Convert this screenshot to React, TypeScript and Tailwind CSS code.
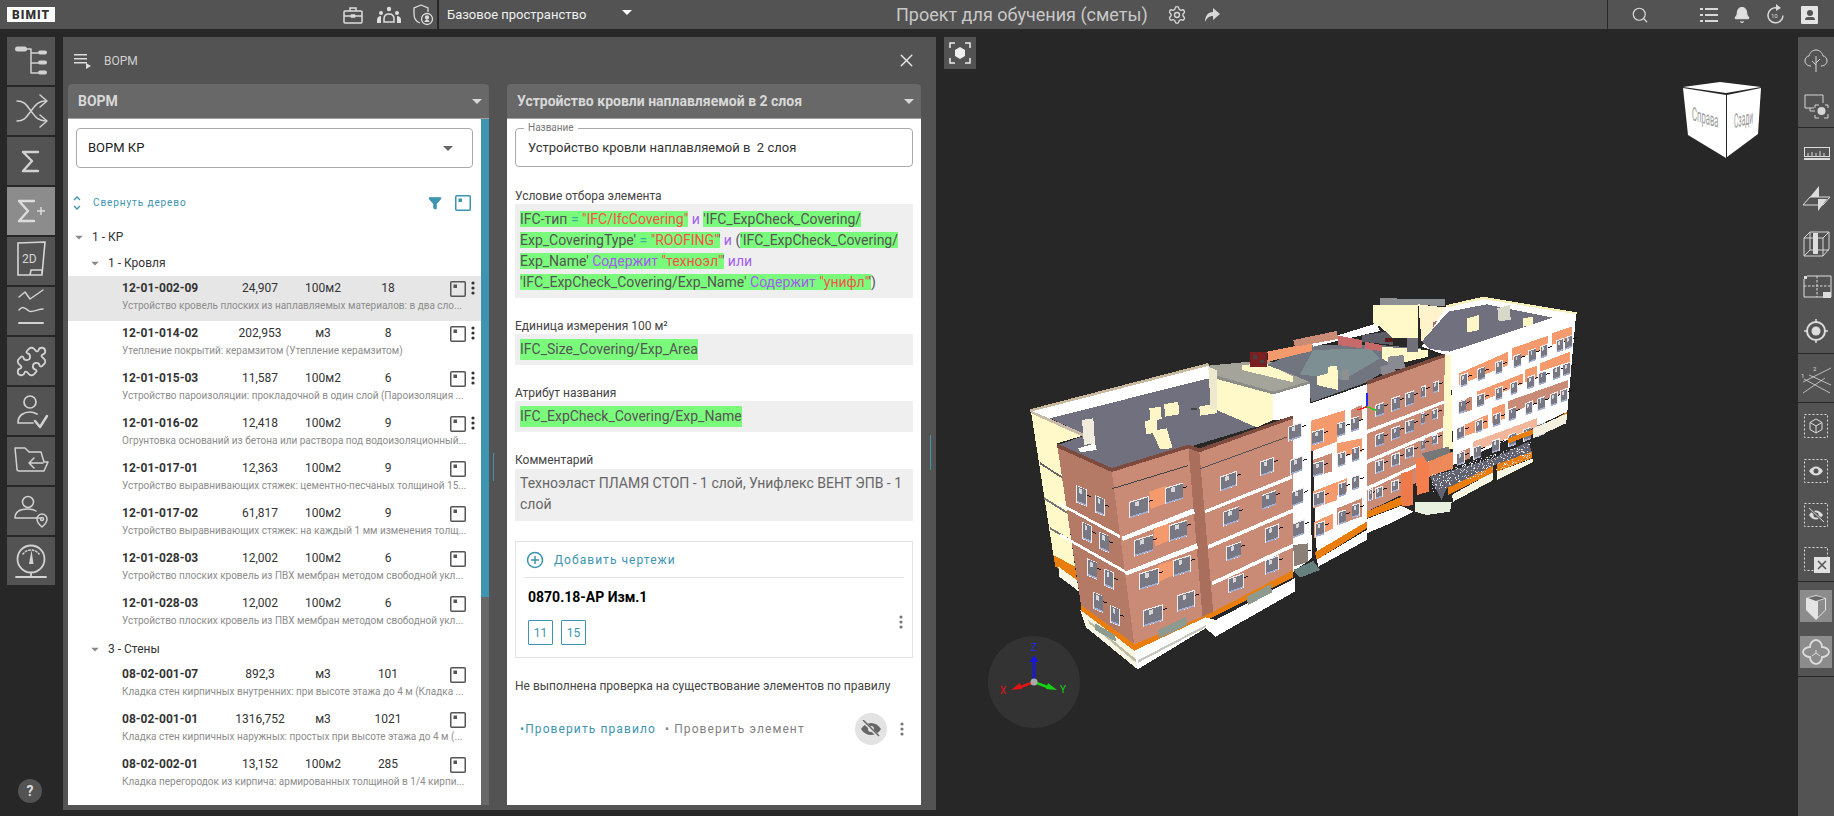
import * as React from 'react';
import { Puzzle, Settings, Search, Bell, Filter, X } from 'lucide-react';

const FONT = "font-['Roboto',sans-serif]";

const rows1 = [
  ['12-01-002-09', '24,907', '100м2', '18', 'Устройство кровель плоских из наплавляемых материалов: в два сло...'],
  ['12-01-014-02', '202,953', 'м3', '8', 'Утепление покрытий: керамзитом (Утепление керамзитом)'],
  ['12-01-015-03', '11,587', '100м2', '6', 'Устройство пароизоляции: прокладочной в один слой (Пароизоляция ...'],
  ['12-01-016-02', '12,418', '100м2', '9', 'Огрунтовка оснований из бетона или раствора под водоизоляционный...'],
  ['12-01-017-01', '12,363', '100м2', '9', 'Устройство выравнивающих стяжек: цементно-песчаных толщиной 15...'],
  ['12-01-017-02', '61,817', '100м2', '9', 'Устройство выравнивающих стяжек: на каждый 1 мм изменения толщ...'],
  ['12-01-028-03', '12,002', '100м2', '6', 'Устройство плоских кровель из ПВХ мембран методом свободной укл...'],
  ['12-01-028-03', '12,002', '100м2', '6', 'Устройство плоских кровель из ПВХ мембран методом свободной укл...'],
];

const rows2 = [
  ['08-02-001-07', '892,3', 'м3', '101', 'Кладка стен кирпичных внутренних: при высоте этажа до 4 м (Кладка ...'],
  ['08-02-001-01', '1316,752', 'м3', '1021', 'Кладка стен кирпичных наружных: простых при высоте этажа до 4 м (...'],
  ['08-02-002-01', '13,152', '100м2', '285', 'Кладка перегородок из кирпича: армированных толщиной в 1/4 кирпи...'],
];

function Caret({ className }: { className: string }) {
  return <span className={`inline-block h-0 w-0 border-x-[5px] border-t-[5px] border-x-transparent ${className}`} />;
}

function Dots({ className = 'fill-[#333]' }: { className?: string }) {
  return (
    <svg width="4" height="14" viewBox="0 0 4 14" className={className}>
      <circle cx="2" cy="2" r="1.6" />
      <circle cx="2" cy="7" r="1.6" />
      <circle cx="2" cy="12" r="1.6" />
    </svg>
  );
}

function SquareMark({ dark = true }: { dark?: boolean }) {
  const c = dark ? '#555' : '#3d94b0';
  return (
    <svg width="16" height="16" viewBox="0 0 16 16">
      <rect x="0.75" y="0.75" width="14.5" height="14.5" rx="1" fill="none" stroke={c} strokeWidth="1.5" />
      <rect x="3.5" y="3.5" width="3.5" height="3.5" fill={c} />
    </svg>
  );
}

function Row({ r, active, dots }: { r: string[]; active?: boolean; dots?: boolean }) {
  return (
    <div className={`h-[45px] pl-[54px] ${active ? 'bg-[#e6e6e6]' : ''}`}>
      <div className="flex h-[24px] items-center text-[12px] text-[#333]">
        <span className="w-[100px] font-bold">{r[0]}</span>
        <span className="w-[76px] text-center">{r[1]}</span>
        <span className="w-[50px] text-center">{r[2]}</span>
        <span className="w-[80px] text-center">{r[3]}</span>
        <span className="ml-[22px] flex items-center pt-[2px]"><SquareMark /></span>
        {dots && <span className="ml-[5px] flex items-center"><Dots /></span>}
      </div>
      <div className="w-[345px] whitespace-nowrap text-[10px] leading-[12px] text-[#8d8d8d]">{r[4]}</div>
    </div>
  );
}

function TreeHead({ text, left }: { text: string; left: string }) {
  return (
    <div className={`flex h-[26px] items-center text-[12px] text-[#333] ${left}`}>
      <Caret className="mr-[8px] scale-75 border-t-[#888]" />
      {text}
    </div>
  );
}

// --- подсветка условий
function G({ children }: { children: React.ReactNode }) {
  return <span className="bg-[#7bfb7b]">{children}</span>;
}
const Red = ({ children }: { children: React.ReactNode }) => <span className="text-[#f2544c]">{children}</span>;
const Vi = ({ children }: { children: React.ReactNode }) => <span className="text-[#a45cf0]">{children}</span>;
const Eq = ({ children }: { children: React.ReactNode }) => <span className="text-[#35b5a0]">{children}</span>;

function Ln({ children }: { children: React.ReactNode }) {
  return <div className="h-[21px] whitespace-nowrap leading-[21px]">{children}</div>;
}

function Attr({ label, text }: { label: string; text: string }) {
  return (
    <div>
      <div className="mx-[8px] h-[15px] text-[12px] leading-[15px] text-[#444]">{label}</div>
      <div className="mx-[8px] flex h-[31px] items-center bg-[#efefef] pl-[5px] text-[14px] text-[#555]">
        <G>{text}</G>
      </div>
    </div>
  );
}

// --- левые кнопки
const railStroke = { fill: 'none', stroke: '#d2d2d2', strokeWidth: 1.5, strokeLinecap: 'round' as const, strokeLinejoin: 'round' as const };

function Rail({ active, children }: { active?: boolean; children: React.ReactNode }) {
  return (
    <div className={`flex h-[48px] w-[48px] items-center justify-center ${active ? 'bg-[#8c8c8c]' : 'bg-[#535353]'}`}>
      {children}
    </div>
  );
}

function Svg48({ children }: { children: React.ReactNode }) {
  return <svg width="48" height="48" viewBox="0 0 48 48">{children}</svg>;
}

function LeftRail() {
  return (
    <div className="flex w-[63px] shrink-0 flex-col gap-[2px] pl-[7px] pt-[8px]">
      <Rail>
        <Svg48>
          <g {...railStroke}>
            <path d="M18 12h6v24h7M24 16h7M24 26h7" />
          </g>
          <rect x="8" y="9.5" width="12" height="5" rx="2.5" fill="#d2d2d2" />
          <rect x="31" y="13.5" width="9" height="4" rx="2" fill="#d2d2d2" />
          <rect x="31" y="23.5" width="9" height="4" rx="2" fill="#d2d2d2" />
          <rect x="31" y="33.5" width="9" height="4" rx="2" fill="#d2d2d2" />
        </Svg48>
      </Rail>
      <Rail>
        <Svg48>
          <g {...railStroke}>
            <path d="M10 14c8 0 10 5 14 10s6 10 15 10M10 34c8 0 10-5 14-10s6-10 15-10" />
            <path d="M33 8l7 6-7 6M33 28l7 6-7 6" />
          </g>
        </Svg48>
      </Rail>
      <Rail>
        <Svg48>
          <path d="M31 15H16l9 9-9 10h15" fill="none" stroke="#d2d2d2" strokeWidth="2.4" strokeLinecap="round" strokeLinejoin="round" />
        </Svg48>
      </Rail>
      <Rail active>
        <Svg48>
          <path d="M27 14H12l9 10-9 10h15" fill="none" stroke="#dcdcdc" strokeWidth="2.4" strokeLinecap="round" strokeLinejoin="round" />
          <path d="M30 24h8M34 20v8" fill="none" stroke="#dcdcdc" strokeWidth="1.5" />
        </Svg48>
      </Rail>
      <Rail>
        <Svg48>
          <path d="M11 6l27-1-3 33H11zM35 38v-5H24l-1 5" fill="none" stroke="#d6d6d6" strokeWidth="1.6" />
          <text x="15" y="26" fontSize="12" fill="#d6d6d6" fontFamily="Roboto">2D</text>
        </Svg48>
      </Rail>
      <Rail>
        <Svg48>
          <g {...railStroke}>
            <path d="M12 10l6-5 5 7 13-9" />
            <path d="M12 23c4-5 7-1 10 1s9-2 14-2" />
            <path d="M12 36h24" strokeWidth="2" />
          </g>
        </Svg48>
      </Rail>
      <Rail><Puzzle size={33} strokeWidth={1.3} color="#d2d2d2" /></Rail>
      <Rail>
        <Svg48>
          <g {...railStroke} strokeWidth={1.7}>
            <circle cx="23" cy="15" r="6" />
            <path d="M11 36c0-8 6-11 12-11 3 0 5 1 7 2M11 36h15" />
            <path d="M28 34l5 6 7-11" strokeWidth={2.4} />
          </g>
        </Svg48>
      </Rail>
      <Rail>
        <Svg48>
          <g {...railStroke}>
            <path d="M8 11h10l4 4h12l3 10h4l-4 9H12c-1 0-2-1-2-2z" />
            <path d="M36 26H22M27 21l-5 5 5 5" />
          </g>
        </Svg48>
      </Rail>
      <Rail>
        <Svg48>
          <g {...railStroke}>
            <circle cx="21" cy="15" r="5.5" />
            <path d="M8 31c0-7 6-9 13-9 3 0 6 .6 8 2M8 31h25" />
            <path d="M40 32c0 4-5 8-5 8s-5-4-5-8a5 5 0 0 1 10 0z" />
            <circle cx="35" cy="32" r="1.5" />
          </g>
        </Svg48>
      </Rail>
      <Rail>
        <Svg48>
          <g {...railStroke}>
            <circle cx="24" cy="22" r="13.5" strokeWidth={1.8} />
            <path d="M16 17a10 10 0 0 1 16 0" strokeDasharray="1.5 2" />
            <path d="M24 36v3M9 40h30" strokeWidth={1.8} />
          </g>
          <path d="M24.5 13l2 14h-4.500z" fill="#d2d2d2" />
        </Svg48>
      </Rail>
      <div className="mt-[192px] ml-[11px] flex h-[24px] w-[24px] items-center justify-center rounded-full bg-[#535353] text-[14px] font-bold text-[#ddd]">?</div>
    </div>
  );
}

// --- правая панель
const ts = { fill: 'none', stroke: '#d6d6d6', strokeWidth: 1, strokeLinejoin: 'round' as const };

function Tool({ active, children, h = 44 }: { active?: boolean; children: React.ReactNode; h?: number }) {
  return (
    <div className="flex items-center justify-center" style={{ height: h }}>
      <div className={`flex h-[32px] w-[32px] items-center justify-center ${active ? 'bg-[#8c8c8c]' : ''}`}>
        <svg width="32" height="32" viewBox="0 0 32 32">{children}</svg>
      </div>
    </div>
  );
}

const Sep = () => <div className="h-[1px] bg-[#272727]" />;

function Dash({ children }: { children?: React.ReactNode }) {
  return (
    <>
      <rect x="4.500" y="4.500" width="23" height="23" fill="none" stroke="#ddd" strokeWidth="1" strokeDasharray="2 2" />
      {children}
    </>
  );
}

function RightBar() {
  return (
    <div className="mt-[8px] flex h-[779px] w-[36px] shrink-0 flex-col bg-[#535353]">
      <Tool h={46}>
        <g {...ts}>
          <path d="M16 28V12M16 21l-4-4M16 19l4-4" />
          <path d="M11 22c-3 0-6-2-6-5s2-5 4-5c1-4 4-6 7-6s6 2 7 6c2 0 4 2 4 5s-3 5-6 5" />
        </g>
      </Tool>
      <Tool h={44}>
        <g {...ts}>
          <path d="M14 19H5V6h18v8" />
          <path d="M10 19v3h5" />
          <path d="M15 16h4M25 16h3v3M15 16v3M28 25v4h-4M15 26v3h4" />
        </g>
        <circle cx="21.500" cy="22" r="4" fill="#d6d6d6" />
      </Tool>
      <Sep />
      <Tool h={49}>
        <rect x="4.500" y="10.500" width="25" height="9" fill="none" stroke="#ddd" />
        <path d="M8 19v-3M12 19v-4M16 19v-3M20 19v-5M24 19v-3" stroke="#ddd" />
        <rect x="4" y="21" width="26" height="2" fill="#ddd" />
      </Tool>
      <Tool>
        <path d="M19 3v11h-9zM18 28V16h9z" fill="#ddd" />
        <path d="M3 22l7-8h20l-7 8z" fill="none" stroke="#ddd" />
      </Tool>
      <Tool>
        <g {...ts}>
          <path d="M4 11h19v18H4zM4 11l6-6h19v17l-6 7M23 11l6-6M10 5v18l-6 6M10 23h19" />
        </g>
        <rect x="13" y="6" width="5" height="21" fill="#ddd" />
      </Tool>
      <Tool>
        <path d="M4 8l3-3h24v21H4z" fill="none" stroke="#ddd" />
        <path d="M17 5v21M4 15h26" fill="none" stroke="#ddd" strokeDasharray="2.500 1.500" />
        <path d="M4 5h3v3H4zM23 21h8v6H23z" fill="#ddd" />
      </Tool>
      <Tool>
        <circle cx="16" cy="16" r="9" fill="none" stroke="#ddd" strokeWidth="2" />
        <circle cx="16" cy="16" r="4.500" fill="#ddd" />
        <path d="M16 4v3M16 25v3M4 16h3M25 16h3" stroke="#ddd" strokeWidth="1.500" />
      </Tool>
      <Sep />
      <Tool h={48}>
        <path d="M3 20l28-14M4 17l26 14M3 31l22-15M9 13l22 10" stroke="#d6d6d6" fill="none" strokeWidth="0.8" />
        <text x="1" y="16" fontSize="6" fill="#ddd" fontFamily="Roboto">1</text>
        <text x="13" y="9" fontSize="6" fill="#ddd" fontFamily="Roboto">2</text>
      </Tool>
      <Sep />
      <Tool h={46}>
        <Dash>
          <path d="M16 9l6 3.500v7L16 23l-6-3.500v-7zM10 12.500l6 3.500 6-3.500M16 16v7" fill="none" stroke="#ddd" />
        </Dash>
      </Tool>
      <Tool>
        <Dash>
          <path d="M9 16c4-6 10-6 14 0-4 6-10 6-14 0z" fill="#ddd" />
          <circle cx="16" cy="16" r="2.500" fill="#535353" />
        </Dash>
      </Tool>
      <Tool>
        <Dash>
          <path d="M9 16c4-6 10-6 14 0-4 6-10 6-14 0z" fill="#ddd" />
          <circle cx="16" cy="16" r="2.500" fill="#535353" />
          <path d="M10 10l14 13" stroke="#535353" strokeWidth="2.500" />
          <path d="M9 9l15 14" stroke="#ddd" />
        </Dash>
      </Tool>
      <Tool>
        <Dash />
        <rect x="14" y="14" width="16" height="16" fill="#e2e2e2" />
        <path d="M18 18l8 8M26 18l-8 8" stroke="#535353" strokeWidth="1.500" />
      </Tool>
      <Sep />
      <Tool h={48} active>
        <path d="M6 8l10-3 10 3v12l-10 10-10-10z" fill="#e4e4e4" />
        <path d="M8 8l8-2 9 2-9 3z" fill="#666" />
        <path d="M18 11l7-2v11l-7 7z" fill="#8c8c8c" />
      </Tool>
      <Tool active>
        <g fill="none" stroke="#dcdcdc" strokeWidth="1.800">
          <path d="M16 4c4 0 6 4 6 7 3 0 7 2 7 5s-4 5-7 5c0 3-2 7-6 7s-6-4-6-7c-3 0-7-2-7-5s4-5 7-5c0-3 2-7 6-7z" />
          <path d="M16 14v3M16 17l-4 3M16 17l4 3" strokeWidth="1" />
        </g>
      </Tool>
      <div className="mt-[2px]"><Sep /></div>
    </div>
  );
}

// --- модель здания, координаты в 3x от точки (1060, 295)
type Win = [number, number, number, number];

function Windows({ list, s }: { list: Win[]; s: number }) {
  const poly = (x: number, y: number, w: number, h: number) =>
    `${x},${y} ${x + w},${y + w * s} ${x + w},${y + w * s + h} ${x},${y + h}`;
  return (
    <>
      {list.map(([x, y, w, h], i) => (
        <g key={i}>
          <polygon points={poly(x, y, w, h)} fill="#ececec" />
          <polygon points={poly(x + 2, y + 3, w - 4, h - 9)} fill="#777883" />
          <polygon points={poly(x + w * 0.3, y + 6 + w * 0.3 * s, w * 0.22, h * 0.28)} fill="#d8d8d8" />
          <polygon points={poly(x + 2, y + h - 6, w - 4, 5)} fill="#a3add0" />
          <polygon points={poly(x + w, y + h * 0.3 + w * s, 12, 3)} fill="#111" />
        </g>
      ))}
    </>
  );
}

function rowF(y0: number, x0: number, xs: number[]): Win[] {
  return xs.map((x) => [x, y0 - (x - x0) * 0.36, 24, 38]);
}

const speck = Array.from({ length: 300 }, (_, i) => {
  const a = Math.sin(i * 12.9898) * 43758.5453;
  const b = Math.sin(i * 78.233) * 24634.6345;
  const x = 1115 + (a - Math.floor(a)) * 295;
  const y = 540 - (x - 1110) * 0.33 + (b - Math.floor(b)) * 50;
  return [x, y];
});

function Building() {
  return (
    <svg className="absolute left-[64px] top-[251px] h-[420px] w-[620px]" viewBox="-180 -45 1860 1260" shapeRendering="crispEdges">
      {/* левое крыло: парапет, боковая стена */}
      <polygon points="-91,347 445,208 470,250 -30,372" fill="#fff" />
      <polygon points="-91,343 445,204 447,212 -91,351" fill="#c8b89e" />
      <polygon points="-87,350 75,420 -8,445 45,815 -20,780" fill="#fff8c9" />
      <polygon points="-87,347 78,418 75,428 -85,356" fill="#c9b9a8" />
      <polygon points="-62,500 15,550 18,558 -60,508" fill="#666" />
      <polygon points="-50,605 22,650 24,658 -48,613" fill="#777" />
      <polygon points="-32,695 28,730 30,738 -30,703" fill="#777" />
      <polygon points="-20,780 45,815 51,855 -14,815" fill="#e97e0e" />
      <polygon points="-5,815 51,855 57,890 -2,845" fill="#f8f6e4" />
      {/* серая кровля */}
      <polygon points="-30,370 445,250 470,345 590,395 155,525 -8,450 80,420" fill="#70707e" />
      <polygon points="66,375 100,370 105,445 72,450" fill="#f0ebdc" />
      <polygon points="55,460 105,445 110,465 60,472" fill="#fff" />
      <polygon points="268,340 302,335 305,372 272,378" fill="#fff6c8" />
      <polygon points="312,328 355,320 357,358 316,365" fill="#fff6c8" />
      <polygon points="255,378 290,372 292,412 258,418" fill="#fff6c8" />
      <polygon points="275,408 320,400 338,460 300,462" fill="#fff6c8" />
      <polygon points="418,335 470,325 470,355 420,362" fill="#fff6c8" />
      <polygon points="392,340 412,338 412,344 392,346" fill="#444" />
      {/* надстройка */}
      <polygon points="445,212 620,195 750,262 640,295 470,245" fill="#a4a49a" />
      <polygon points="445,215 470,225 472,345 452,340" fill="#eee9cc" />
      <polygon points="470,245 640,295 640,375 590,397 470,345" fill="#fff8c9" />
      <polygon points="640,295 750,262 752,780 725,790 725,355 680,372 640,375" fill="#fff" />
      <polygon points="545,210 620,205 700,245 700,262 545,225" fill="#fff8c9" />
      <polygon points="470,242 640,290 750,258 750,266 640,298 470,252" fill="#8d8d88" />
      <polygon points="570,172 622,172 622,215 570,215" fill="#7a2020" />
      <polygon points="578,180 590,180 590,192 578,192" fill="#444" />
      <polygon points="600,195 612,195 612,205 600,205" fill="#444" />
      {/* центр */}
      <polygon points="620,210 755,150 960,150 1085,160 920,262 752,322 750,262 700,240" fill="#70757f" />
      <polygon points="760,165 930,160 960,190 850,255 720,238" fill="#7d8f93" />
      <polygon points="755,145 950,85 960,108 760,155" fill="#fff" />
      <polygon points="622,170 755,143 755,168 625,200" fill="#f49a6c" />
      <polygon points="700,135 830,108 835,132 705,155" fill="#c98a76" />
      <polygon points="835,122 905,135 905,160 835,150" fill="#c96a6a" />
      <polygon points="905,120 1000,108 1000,150 905,140" fill="#5d5d68" />
      <polygon points="915,140 965,150 965,168 915,162" fill="#c96a6a" />
      <polygon points="770,245 835,225 835,285 770,270" fill="#fff8c9" />
      <polygon points="805,215 830,212 830,250 805,250" fill="#fff8c9" />
      <polygon points="845,225 868,222 868,255 845,255" fill="#8f8f8f" />
      <polygon points="965,155 1105,165 1105,185 1000,210 965,190" fill="#fff8c9" />
      <polygon points="985,185 1030,180 1035,220 985,225" fill="#8a8a92" />
      <polygon points="1040,130 1075,130 1075,170 1040,170" fill="#70707a" />
      <polygon points="960,215 1000,205 1010,235 965,240" fill="#8a8a92" />
      <polygon points="975,130 1000,128 1000,140 975,142" fill="#5a1a1a" />
      {/* башня и правая кровля */}
      <polygon points="940,30 1075,30 1075,130 1000,130 960,95 940,85" fill="#fff8c9" />
      <polygon points="960,10 1155,12 1155,32 960,30" fill="#8c9092" />
      <polygon points="1075,28 1160,38 1160,132 1085,142" fill="#fff3cc" />
      <polygon points="1120,80 1142,78 1142,118 1120,120" fill="#a4706a" />
      <polygon points="1160,30 1270,5 1550,55 1548,68 1170,185 1085,155" fill="#fff" />
      <polygon points="1160,30 1270,5 1550,52 1550,58 1270,12 1160,38" fill="#f7efb8" />
      <polygon points="1085,140 1165,50 1280,28 1478,68 1170,170 1110,162" fill="#70707e" />
      <polygon points="1220,70 1258,60 1258,105 1222,112" fill="#fff6c8" />
      <polygon points="1388,70 1418,65 1418,90 1390,95" fill="#fff6c8" />
      <polygon points="1312,40 1350,30 1352,75 1316,78" fill="#d8d8c8" />
      {/* фасады */}
      <polygon points="-8,452 155,525 223,1050 63,930" fill="#b47a66" />
      <polygon points="155,525 385,455 428,970 223,1050" fill="#c98b76" />
      <polygon points="385,455 418,468 460,955 428,970" fill="#aa6f5c" />
      <polygon points="418,470 725,355 700,830 460,955" fill="#c98b76" />
      <polygon points="-8,446 155,519 385,449 418,460 680,368 725,352 725,362 418,472 385,460 155,531 -8,458" fill="#7d4a3e" />
      <polygon points="700,340 752,325 755,790 700,830" fill="#fff" />
      <polygon points="752,325 920,268 920,680 770,770" fill="#fff" />
      <polygon points="920,262 1155,180 1160,480 1025,600 920,650" fill="#c98b76" />
      <polygon points="920,258 1155,176 1155,186 920,270" fill="#7d4a3e" />
      <polygon points="1172,182 1548,62 1522,350 1180,510" fill="#fff" />
      <polygon points="1155,180 1172,180 1178,462 1148,465" fill="#fff8c9" />
      {/* полосы-перекрытия, кирпич */}
      <polygon points="185,725 400,640 405,655 188,738" fill="#fff" />
      <polygon points="195,830 410,745 415,760 198,842" fill="#fff" />
      <polygon points="-5,620 180,720 180,730 -3,630" fill="#fff" />
      <polygon points="0,715 195,825 195,835 2,725" fill="#fff" />
      <polygon points="435,645 695,540 695,552 435,655" fill="#fff" />
      <polygon points="445,750 700,640 700,652 445,762" fill="#fff" />
      <polygon points="455,860 700,745 700,757 455,872" fill="#fff" />
      <polygon points="920,405 1155,315 1155,325 920,417" fill="#fff" />
      <polygon points="920,495 1155,395 1155,405 920,507" fill="#fff" />
      <polygon points="920,575 1150,470 1150,480 920,587" fill="#fff" />
      <polygon points="155,580 385,510 385,513 155,583" fill="#444" />
      <polygon points="420,520 680,425 680,428 420,523" fill="#555" />
      {/* панели на белых участках */}
      <polygon points="752,378 856,345 856,405 832,412 832,440 752,470" fill="#f49a6c" />
      <polygon points="832,445 905,430 905,470 832,490" fill="#f49a6c" />
      <polygon points="758,495 815,475 815,530 758,545" fill="#c98b76" />
      <polygon points="758,590 860,550 860,590 832,600 832,615 760,640" fill="#f49a6c" />
      <polygon points="872,520 905,505 905,560 872,570" fill="#fff" />
      <polygon points="762,682 820,655 820,700 762,730" fill="#f49a6c" />
      <polygon points="832,640 905,610 905,665 832,690" fill="#c98b76" />
      <polygon points="872,345 905,330 905,375 872,385" fill="#c98b76" />
      <polygon points="268,590 318,572 318,625 272,642" fill="#f49a6c" />
      <polygon points="282,700 330,685 330,735 284,755" fill="#f49a6c" />
      <polygon points="295,810 342,795 342,840 298,860" fill="#f49a6c" />
      <polygon points="1198,235 1345,170 1345,210 1198,270" fill="#f49a6c" />
      <polygon points="1355,160 1465,122 1465,160 1355,195" fill="#f49a6c" />
      <polygon points="1475,115 1535,95 1535,130 1475,150" fill="#f49a6c" />
      <polygon points="1250,290 1390,235 1390,265 1250,325" fill="#f49a6c" />
      <polygon points="1440,205 1530,170 1530,200 1440,230" fill="#f49a6c" />
      <polygon points="1395,225 1432,212 1432,250 1395,262" fill="#f49a6c" />
      <polygon points="1195,320 1235,305 1235,345 1195,358" fill="#c98b76" />
      <polygon points="1190,400 1285,358 1285,398 1190,432" fill="#f49a6c" />
      <polygon points="1295,340 1335,325 1335,370 1295,385" fill="#f49a6c" />
      <polygon points="1345,318 1525,255 1525,290 1345,355" fill="#c98b76" />
      <polygon points="1190,475 1230,458 1230,490 1190,505" fill="#c98b76" />
      <polygon points="1240,440 1430,370 1430,395 1240,470" fill="#f2b79a" />
      {/* окна */}
      <Windows s={0.42} list={[[48, 570, 32, 52], [105, 600, 30, 52], [66, 680, 30, 52], [118, 710, 30, 52], [82, 790, 30, 52], [132, 820, 30, 52], [100, 890, 30, 52], [150, 930, 30, 52]]} />
      <Windows s={-0.3} list={[[208, 620, 58, 50], [316, 578, 54, 50], [222, 735, 58, 50], [328, 690, 54, 50], [238, 835, 58, 50], [340, 795, 52, 50], [250, 945, 58, 50], [352, 900, 52, 50]]} />
      <Windows s={-0.36} list={[[480, 545, 50, 45], [600, 500, 42, 45], [685, 395, 40, 45], [490, 650, 48, 45], [605, 600, 44, 45], [690, 495, 38, 45], [498, 755, 46, 45], [615, 700, 42, 45], [695, 590, 36, 45], [505, 850, 46, 45], [615, 795, 42, 45], [698, 685, 36, 45], [702, 770, 40, 40]]} />
      <Windows s={-0.3} list={[[755, 410, 36, 42], [830, 385, 28, 42], [872, 370, 26, 42], [758, 505, 34, 42], [832, 475, 26, 42], [875, 460, 24, 42], [760, 595, 34, 42], [835, 565, 24, 42], [875, 545, 24, 42], [765, 685, 30, 42], [835, 650, 24, 40], [875, 630, 24, 40]]} />
      <Windows s={-0.36} list={[[945, 330, 28, 38], [993, 310, 28, 42], [1035, 295, 28, 42], [1082, 275, 16, 36], [1118, 262, 18, 34], [945, 420, 28, 38], [993, 400, 28, 38], [1035, 380, 28, 38], [1082, 355, 14, 36], [1115, 345, 18, 32], [945, 500, 26, 38], [993, 480, 26, 38], [1035, 460, 26, 34], [1082, 436, 14, 32], [1115, 422, 18, 30], [925, 585, 14, 34], [945, 580, 24, 34], [993, 560, 24, 34]]} />
      <Windows s={-0.36} list={rowF(240, 1200, [1200, 1252, 1305, 1360, 1405, 1440, 1488, 1514])} />
      <Windows s={-0.36} list={rowF(320, 1195, [1195, 1250, 1305, 1350, 1400, 1435, 1478, 1508])} />
      <Windows s={-0.36} list={rowF(398, 1190, [1190, 1245, 1298, 1345, 1395, 1432, 1470, 1500])} />
      <Windows s={-0.36} list={rowF(475, 1190, [1190, 1240, 1295, 1345, 1390, 1430])} />
      {/* цоколь */}
      <polygon points="63,930 223,1047 223,1067 63,955" fill="#e97e0e" />
      <polygon points="223,1047 428,965 460,950 700,825 700,847 465,963 223,1067" fill="#e97e0e" />
      <polygon points="765,772 920,680 920,700 770,795" fill="#e97e0e" />
      <polygon points="920,650 1025,605 1025,630 920,670" fill="#e97e0e" />
      <polygon points="1440,400 1522,350 1520,365 1445,412" fill="#e97e0e" />
      <polygon points="1345,430 1440,395 1440,410 1345,445" fill="#e97e0e" />
      <polygon points="61,945 223,1067 233,1123 78,997" fill="#f6f4e2" />
      <polygon points="223,1067 437,967 467,975 704,850 704,890 467,1025 437,1000 233,1123" fill="#fff" />
      <polygon points="85,975 228,1093 228,1103 87,985" fill="#bdbda8" />
      <polygon points="235,1095 437,990 437,997 235,1103" fill="#c8c8c0" />
      <polygon points="770,795 920,705 920,735 775,815" fill="#fff" />
      <polygon points="920,672 1025,632 1060,650 980,690 920,715" fill="#fff" />
      <polygon points="1420,400 1522,355 1518,385 1420,430" fill="#f4f0e0" />
      <polygon points="295,1005 378,965 382,990 298,1030" fill="#8d9a90" />
      <polygon points="560,905 632,868 636,892 564,930" fill="#8d9a90" />
      <polygon points="105,985 165,1020 168,1040 105,1005" fill="#8d9a90" />
      <polygon points="700,750 745,745 745,800 702,815" fill="#8a8078" />
      <polygon points="700,825 760,798 780,825 720,848" fill="#66807e" />
      {/* входы и козырёк */}
      <polygon points="1065,620 1175,620 1170,650 1100,660 1065,650" fill="#e8f0e0" />
      <polygon points="1022,535 1060,525 1060,630 1025,635" fill="#ee7a4a" />
      <polygon points="1068,490 1105,485 1108,590 1070,600" fill="#f57e4e" />
      <polygon points="1085,475 1165,455 1180,490 1100,500" fill="#777" />
      <polygon points="1105,500 1178,470 1180,520 1108,545" fill="#ee8a5a" />
      <polygon points="1175,600 1300,530 1300,555 1180,620" fill="#f6f4e2" />
      <polygon points="1310,530 1420,490 1420,500 1310,555" fill="#f6f4e2" />
      <polygon points="1165,570 1300,510 1300,532 1165,600" fill="#e97e0e" />
      <polygon points="1310,505 1415,470 1415,490 1310,530" fill="#e97e0e" />
      <polygon points="1110,545 1300,490 1405,440 1415,470 1305,510 1160,580 1145,615" fill="#61626f" />
      {speck.map((p, i) => (
        <rect key={i} x={p[0]} y={p[1]} width="3" height="3" fill={i % 3 ? '#c8c8d0' : '#ffffff'} />
      ))}
      {/* оси в центре */}
      <path d="M921 335V293" stroke="#1b2bff" strokeWidth="4" />
      <path d="M921 335l-28 10" stroke="#ff1b1b" strokeWidth="4" />
      <path d="M921 335l30 12" stroke="#19d419" strokeWidth="4" />
    </svg>
  );
}

function Cube() {
  return (
    <svg className={`absolute left-[747px] top-[53px] ${FONT}`} width="80" height="78" viewBox="0 0 80 78">
      <polygon points="0,5 37,0 78,5 43,11" fill="#fff" />
      <polygon points="0,6 43,13 43,76 5,53" fill="#fff" />
      <polygon points="44,13 78,6 75,52 44,75" fill="#fff" />
      <text transform="matrix(0.7 0.2 0 1.7 9 38)" fontSize="11" fill="#999">Справа</text>
      <text transform="matrix(0.6 -0.15 0 1.8 51 46)" fontSize="11" fill="#999">Сзади</text>
    </svg>
  );
}

function Gizmo() {
  return (
    <svg className={`absolute left-[52px] top-[607px] ${FONT}`} width="92" height="92" viewBox="0 0 92 92">
      <circle cx="46" cy="46" r="46" fill="#333" />
      <path d="M46 46V24" stroke="#1414f0" strokeWidth="2.500" />
      <path d="M42 26l4-7 4 7z" fill="#1414f0" />
      <path d="M46 46l16 6" stroke="#14d414" strokeWidth="2.500" />
      <path d="M60 47l9 7-11-1z" fill="#14d414" />
      <path d="M46 46l-16 6" stroke="#e01414" strokeWidth="2.500" />
      <path d="M32 47l-9 7 11-1z" fill="#e01414" />
      <circle cx="46" cy="46" r="3.500" fill="#aaa" />
      <text x="43" y="15" fontSize="10" fill="#1c2ce0">Z</text>
      <text x="72" y="57" fontSize="10" fill="#14d414">Y</text>
      <text x="12" y="58" fontSize="10" fill="#e01414">X</text>
    </svg>
  );
}

function Viewer() {
  return (
    <div className="relative flex-1">
      <div className="absolute left-[8px] top-[8px] flex h-[32px] w-[32px] items-center justify-center bg-[#535353]">
        <svg width="24" height="24" viewBox="0 0 24 24" fill="none" stroke="#eee" strokeWidth="1.500">
          <path d="M2 7V2h5M17 2h5v5M22 17v5h-5M7 22H2v-5" />
          <path d="M12 6l5 3v6l-5 3-5-3V9z" fill="#eee" stroke="none" />
        </svg>
      </div>
      <Cube />
      <Building />
      <Gizmo />
    </div>
  );
}

export default function App() {
  return (
    <div className={`flex h-[816px] w-[1834px] flex-col overflow-hidden bg-[#272727] ${FONT}`}>
      {/* верхняя панель */}
      <div className="flex h-[29px] shrink-0 items-center bg-[#535353]">
        <div className="flex h-full w-[437px] items-center pl-[7px]">
          <div className="flex h-[15px] w-[48px] items-center justify-center bg-white text-[12px] font-black tracking-[1px] text-[#333]">BIMIT</div>
          <svg className="ml-[288px]" width="20" height="18" viewBox="0 0 20 18" fill="none" stroke="#ddd" strokeWidth="1.500">
            <rect x="1" y="5" width="18" height="12" rx="1" />
            <path d="M7 5V2h6v3M1 10h18" />
            <rect x="8.500" y="9" width="3" height="2" fill="#ddd" />
          </svg>
          <svg className="ml-[14px]" width="24" height="18" viewBox="0 0 24 18" fill="#ddd">
            <circle cx="12" cy="3" r="2.200" />
            <circle cx="4" cy="7" r="2" />
            <circle cx="20" cy="7" r="2" />
            <path d="M7 16v-3c0-3 2-5 5-5s5 2 5 5v3z" fill="none" stroke="#ddd" strokeWidth="1.500" />
            <path d="M0 17v-3c0-3 2-4 4-4v7zM24 17v-3c0-3-2-4-4-4v7z" />
          </svg>
          <svg className="ml-[11px]" width="22" height="22" viewBox="0 0 22 22" fill="none" stroke="#ddd" strokeWidth="1.300">
            <path d="M9 1l7 3v4M9 1L2 4v6c0 5 3 8 6 9" />
            <circle cx="15" cy="15" r="5.500" />
            <circle cx="15" cy="13.500" r="1.500" fill="#ddd" />
            <path d="M12.500 18c0-3 5-3 5 0z" fill="#ddd" stroke="none" />
          </svg>
        </div>
        <div className="h-full w-[2px] bg-[#272727]" />
        <div className="flex h-full w-[1168px] items-center">
          <span className="ml-[8px] w-[139px] whitespace-nowrap text-[13px] text-[#f0f0f0]">Базовое пространство</span>
          <Caret className="ml-[36px] -mt-[4px] border-t-white" />
          <span className="ml-[264px] whitespace-nowrap text-[18px] text-[#c8c8c8]">Проект для обучения (сметы)</span>
          <Settings className="ml-[19px]" size={20} strokeWidth={1.600} color="#d8d8d8" />
          <svg className="ml-[17px]" width="16" height="14" viewBox="0 0 16 14" fill="#d8d8d8">
            <path d="M9 0l7 6-7 6V8C5 8 3 10 1 14c0-6 3-10 8-10z" />
          </svg>
        </div>
        <div className="h-full w-[1px] bg-[#272727]" />
        <div className="flex h-full flex-1 items-center">
          <Search className="ml-[23px]" size={18} strokeWidth={1.600} color="#d8d8d8" />
          <svg className="ml-[51px]" width="18" height="16" viewBox="0 0 18 16" fill="#d8d8d8">
            <rect y="1" width="3" height="2" />
            <rect x="5" y="1" width="13" height="2" />
            <rect y="7" width="3" height="2" />
            <rect x="5" y="7" width="13" height="2" />
            <rect y="13" width="3" height="2" />
            <rect x="5" y="13" width="13" height="2" />
          </svg>
          <Bell className="ml-[15px]" size={18} strokeWidth={1.500} color="#e0e0e0" fill="#e0e0e0" />
          <svg className="ml-[15px]" width="18" height="22" viewBox="0 0 18 22" fill="none" stroke="#d8d8d8" strokeWidth="1.500">
            <path d="M11 4a7.500 7.500 0 1 0 6 7.500" />
            <path d="M10 0l5 4-5 3z" fill="#d8d8d8" stroke="none" />
            <text x="5" y="14" fontSize="6" stroke="none" fill="#d8d8d8" fontFamily="Roboto">10</text>
          </svg>
          <div className="ml-[17px] flex h-[18px] w-[17px] flex-col items-center justify-center gap-[1px] rounded-[1px] bg-[#e4e4e4]">
            <span className="h-[6px] w-[6px] rounded-full bg-[#535353]" />
            <span className="h-[3px] w-[10px] rounded-t-[3px] bg-[#535353]" />
          </div>
        </div>
      </div>

      <div className="flex flex-1">
        <LeftRail />

        {/* панель ВОРМ */}
        <div className="relative mt-[8px] flex h-[773px] w-[873px] shrink-0 flex-col bg-[#535353]">
          <div className="flex h-[47px] items-center pl-[11px] text-[12px] text-[#d0d0d0]">
            <svg width="18" height="16" viewBox="0 0 18 16" fill="#ddd">
              <rect y="1" width="13" height="1.500" />
              <rect y="5" width="13" height="1.500" />
              <rect y="9" width="13" height="1.500" />
              <path d="M12 10l5 3-5 3z" />
            </svg>
            <span className="ml-[12px]">ВОРМ</span>
            <X className="ml-auto mr-[19px]" size={21} strokeWidth={1.600} color="#e8e8e8" />
          </div>

          <div className="flex gap-[18px] pl-[5px]">
            {/* левая колонка */}
            <div className="flex h-[721px] w-[421px] flex-col">
              <div className="flex h-[35px] items-center justify-between rounded-t-[4px] border-b border-[#a0a0a0] bg-[#686868] pl-[10px] pr-[7px] text-[14px] font-bold text-[#d8d8d8]">
                ВОРМ
                <Caret className="border-t-[#d8d8d8]" />
              </div>
              <div className="flex min-h-0 flex-1">
                <div className="w-[413px] bg-white">
                  <div className="mx-[8px] mt-[9px] flex h-[40px] items-center justify-between rounded-[4px] border border-[#aaa] pl-[11px] pr-[19px] text-[13px] text-[#222]">
                    ВОРМ КР
                    <Caret className="border-t-[#666]" />
                  </div>
                  <div className="mt-[27px] flex h-[15px] items-center pl-[5px] text-[10px] tracking-[0.9px] text-[#3d94b0]">
                    <svg width="8" height="14" viewBox="0 0 8 14" fill="none" stroke="#3d94b0" strokeWidth="1.300">
                      <path d="M1 4l3-3 3 3M1 10l3 3 3-3" />
                    </svg>
                    <span className="ml-[12px]">Свернуть дерево</span>
                    <Filter className="ml-auto" size={14} color="#3d94b0" fill="#3d94b0" />
                    <span className="ml-[13px] mr-[10px] flex"><SquareMark dark={false} /></span>
                  </div>
                  <div className="mt-[14px]">
                    <TreeHead text="1 - КР" left="pl-[6px]" />
                    <TreeHead text="1 - Кровля" left="pl-[22px]" />
                    {rows1.map((r, i) => (
                      <Row key={i} r={r} active={i === 0} dots={i < 4} />
                    ))}
                    <TreeHead text="3 - Стены" left="pl-[22px]" />
                    {rows2.map((r, i) => (
                      <Row key={i} r={r} />
                    ))}
                  </div>
                </div>
                <div className="w-[8px] bg-[#686868]">
                  <div className="h-[478px] bg-[#3d94b0]" />
                </div>
              </div>
            </div>

            {/* правая колонка */}
            <div className="flex h-[721px] w-[414px] flex-col">
              <div className="flex h-[35px] items-center justify-between rounded-t-[4px] border-b border-[#a0a0a0] bg-[#686868] pl-[10px] pr-[7px] text-[14px] font-bold text-[#d8d8d8]">
                Устройство кровли наплавляемой в 2 слоя
                <Caret className="border-t-[#d8d8d8]" />
              </div>
              <div className="flex-1 bg-white">
                <div className="relative mx-[8px] mt-[9px] flex h-[39px] items-center rounded-[4px] border border-[#aaa] pl-[12px] text-[13px] text-[#333]">
                  <span className="absolute -top-[7px] left-[8px] bg-white px-[4px] text-[10px] leading-[12px] text-[#777]">Название</span>
                  <span className="whitespace-pre">Устройство кровли наплавляемой в  2 слоя</span>
                </div>
                <div className="mx-[8px] mt-[22px] h-[15px] text-[12px] leading-[15px] text-[#444]">Условие отбора элемента</div>
                <div className="mx-[8px] h-[94px] bg-[#efefef] pl-[5px] pt-[5px] text-[14px] text-[#555]">
                  <Ln>
                    <G>IFC-тип <Eq>=</Eq> <Red>"IFC/IfcCovering"</Red></G> <Vi>и</Vi> <G>'IFC_ExpCheck_Covering/</G>
                  </Ln>
                  <Ln>
                    <G>Exp_CoveringType' <Eq>=</Eq> <Red>"ROOFING"</Red>'</G> <Vi>и</Vi> (<G>'IFC_ExpCheck_Covering/</G>
                  </Ln>
                  <Ln>
                    <G>Exp_Name' <Vi>Содержит</Vi> <Red>"техноэл"</Red>'</G> <Vi>или</Vi>
                  </Ln>
                  <Ln>
                    <G>'IFC_ExpCheck_Covering/Exp_Name' <Vi>Содержит</Vi> <Red>"унифл"</Red>'</G>)
                  </Ln>
                </div>
                <div className="mt-[21px]"><Attr label="Единица измерения 100 м²" text="IFC_Size_Covering/Exp_Area" /></div>
                <div className="mt-[21px]"><Attr label="Атрибут названия" text="IFC_ExpCheck_Covering/Exp_Name" /></div>
                <div className="mx-[8px] mt-[21px] h-[15px] text-[12px] leading-[15px] text-[#444]">Комментарий</div>
                <div className="mx-[8px] mt-[1px] h-[52px] bg-[#efefef] px-[5px] pt-[4px] text-[14px] leading-[21px] text-[#666]">
                  Техноэласт ПЛАМЯ СТОП - 1 слой, Унифлекс ВЕНТ ЭПВ - 1 слой
                </div>
                <div className="mx-[8px] mt-[20px] h-[117px] border border-[#e3e3e3] px-[8px]">
                  <div className="flex h-[36px] items-center border-b border-[#e3e3e3] pl-[2px] text-[12px] tracking-[1.05px] text-[#3d94b0]">
                    <svg width="18" height="18" viewBox="0 0 18 18" fill="none" stroke="#3d94b0" strokeWidth="1.500">
                      <circle cx="9" cy="9" r="7.500" />
                      <path d="M9 5v8M5 9h8" />
                    </svg>
                    <span className="ml-[10px]">Добавить чертежи</span>
                  </div>
                  <div className="relative pl-[4px]">
                    <div className="mt-[11px] text-[14px] font-bold leading-[16px] text-black">0870.18-АР Изм.1</div>
                    <div className="mt-[15px] flex gap-[8px] text-[12px] text-[#3d94b0]">
                      <span className="flex h-[25px] w-[25px] items-center justify-center rounded-[1px] border border-[#3d94b0]">11</span>
                      <span className="flex h-[25px] w-[25px] items-center justify-center rounded-[1px] border border-[#3d94b0]">15</span>
                    </div>
                    <span className="absolute right-[1px] top-[26px] flex"><Dots className="fill-[#777]" /></span>
                  </div>
                </div>
                <div className="mx-[8px] mt-[21px] text-[12px] leading-[15px] text-[#444]">Не выполнена проверка на существование элементов по правилу</div>
                <div className="mx-[8px] mt-[19px] flex h-[32px] items-center pl-[5px] text-[12px] tracking-[1.1px]">
                  <span className="text-[#3d94b0]">•Проверить правило</span>
                  <span className="ml-[9px] text-[#808080]">• Проверить элемент</span>
                  <span className="ml-auto flex h-[32px] w-[32px] items-center justify-center rounded-full bg-[#e3e3e3]">
                    <svg width="22" height="18" viewBox="0 0 22 18">
                      <path d="M1 9c5-8 15-8 20 0-5 8-15 8-20 0z" fill="#666" />
                      <circle cx="11" cy="9" r="3" fill="#e3e3e3" />
                      <path d="M3 1l16 16" stroke="#e3e3e3" strokeWidth="3" />
                      <path d="M3 0l16 16" stroke="#666" strokeWidth="1.500" />
                    </svg>
                  </span>
                  <span className="ml-[13px] mr-[9px] flex"><Dots className="fill-[#777]" /></span>
                </div>
              </div>
            </div>
          </div>
          <div className="absolute left-[430px] top-[416px] h-[28px] w-[1px] bg-[#3d94b0]" />
          <div className="absolute left-[867px] top-[398px] h-[35px] w-[1px] bg-[#3d94b0]" />
        </div>

        <Viewer />
        <RightBar />
      </div>
    </div>
  );
}
